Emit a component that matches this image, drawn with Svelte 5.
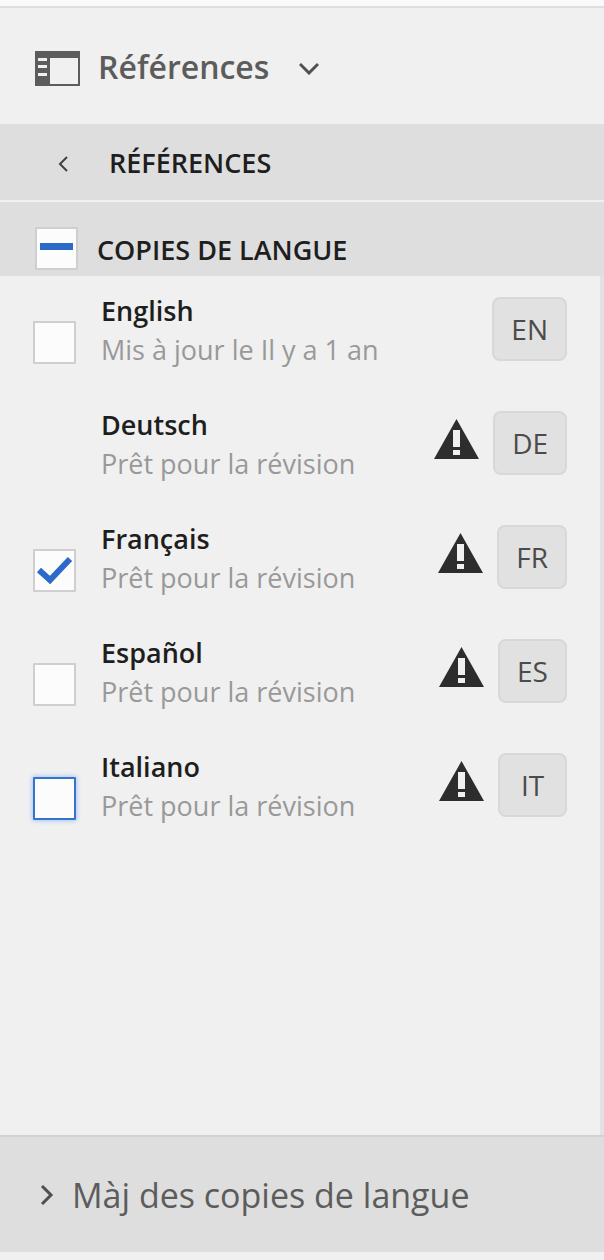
<script>
  let copies = $state([
    { code: 'EN', name: 'English', status: 'Mis à jour le Il y a 1 an', selectable: true, checked: false, warning: false },
    { code: 'DE', name: 'Deutsch', status: 'Prêt pour la révision', selectable: false, checked: false, warning: true },
    { code: 'FR', name: 'Français', status: 'Prêt pour la révision', selectable: true, checked: true, warning: true },
    { code: 'ES', name: 'Español', status: 'Prêt pour la révision', selectable: true, checked: false, warning: true },
    { code: 'IT', name: 'Italiano', status: 'Prêt pour la révision', selectable: true, checked: false, warning: true, active: true }
  ]);

  let some = $derived(copies.some((c) => c.checked));
  let all = $derived(copies.every((c) => c.checked || !c.selectable));

  function toggleAll(event) {
    const value = event.currentTarget.checked;
    for (const copy of copies) if (copy.selectable) copy.checked = value;
  }
</script>

<div class="rail">
  <header class="top">
    <button class="switcher">
      <svg class="panel-icon" width="45" height="40" viewBox="0 0 45 40" aria-hidden="true">
        <path fill="#5c5c5c" fill-rule="evenodd" d="M0 5H45V40H0ZM15 12V38H43V12ZM3 12V15H12V12ZM3 19V22H12V19ZM3 27V30H12V27Z" />
      </svg>
      <span class="title">Références</span>
      <svg class="down" width="20" height="18" viewBox="0 0 20 18" aria-hidden="true">
        <path d="M1 7L10 16L19 7" fill="none" stroke="#505050" stroke-width="3" />
      </svg>
    </button>
  </header>

  <nav class="back-bar">
    <button class="back">
      <svg width="10" height="20" viewBox="0 0 10 20" aria-hidden="true">
        <path d="M9 5L2 12L9 19" fill="none" stroke="#404040" stroke-width="2" />
      </svg>
      <span>RÉFÉRENCES</span>
    </button>
  </nav>

  <label class="group">
    <input type="checkbox" checked={all} indeterminate={some && !all} onchange={toggleAll} />
    <span>COPIES DE LANGUE</span>
  </label>

  <ul class="list">
    {#each copies as copy (copy.code)}
      <li class="row">
        <span class="tick">
          {#if copy.selectable}
            <input id="copy-{copy.code}" type="checkbox" class:active={copy.active} bind:checked={copy.checked} />
          {/if}
        </span>
        <label class="text" for={copy.selectable ? `copy-${copy.code}` : undefined}>
          <span class="name">{copy.name}</span>
          <span class="status">{copy.status}</span>
        </label>
        {#if copy.warning}
          <svg class="warning" width="45" height="40" viewBox="0 0 45 40" aria-hidden="true">
            <path fill="#2d2d2d" d="M22.500 0L45 40H0Z" />
            <path fill="#f0f0f0" d="M19 11H26V28H19ZM19 31H26V36H19Z" />
          </svg>
        {/if}
        <span class="code">{copy.code}</span>
      </li>
    {/each}
  </ul>

  <footer class="bottom">
    <button class="update">
      <svg width="14" height="20" viewBox="0 0 14 20" aria-hidden="true">
        <path d="M2 1L11 10L2 19" fill="none" stroke="#505050" stroke-width="3" />
      </svg>
      <span>Màj des copies de langue</span>
    </button>
  </footer>
</div>

<style>
  :global(body) {
    margin: 0;
    background: #f0f0f0;
  }

  .rail {
    box-sizing: border-box;
    display: flex;
    flex-direction: column;
    min-height: 100vh;
    padding-bottom: 8px;
    border-top: 6px solid #fafafa;
    background: #f0f0f0;
    font-family: 'Open Sans', 'Noto Sans', sans-serif;
    color: #1e1e1e;
  }

  button {
    display: flex;
    align-items: center;
    margin: 0;
    padding: 0;
    border: 0;
    background: none;
    color: inherit;
    font: inherit;
    cursor: pointer;
  }

  svg {
    flex: none;
    display: block;
  }

  .top {
    display: flex;
    height: 116px;
    padding: 0 35px;
    border-top: 2px solid #dedede;
  }

  .title {
    margin: 0 30px 0 18px;
    color: #5c5c5c;
    font-size: 32px;
    font-weight: 600;
  }

  .back-bar {
    display: flex;
    height: 76px;
    padding: 0 58px;
    border-bottom: 2px solid #f0f0f0;
    background: #dedede;
    font-size: 27px;
    font-weight: 600;
  }

  .back {
    gap: 41px;
  }

  .group {
    display: flex;
    align-items: flex-end;
    gap: 19px;
    height: 68px;
    padding: 0 35px 6px;
    background: #dedede;
    font-size: 27px;
    font-weight: 600;
    line-height: 40px;
  }

  input {
    flex: none;
    box-sizing: border-box;
    width: 43px;
    height: 43px;
    margin: 0;
    border: 2px solid #cfcfcf;
    border-radius: 1px;
    appearance: none;
    background: #fcfcfc center / 100% 100% no-repeat;
  }

  input:checked {
    background-image: url("data:image/svg+xml,%3Csvg xmlns='http://www.w3.org/2000/svg' viewBox='0 0 39 39'%3E%3Cpath d='M4 19L15 29L35 8' fill='none' stroke='%232b6ac8' stroke-width='6'/%3E%3C/svg%3E");
  }

  input:indeterminate {
    background-image: url("data:image/svg+xml,%3Csvg xmlns='http://www.w3.org/2000/svg' viewBox='0 0 39 39'%3E%3Cpath d='M3 14H36V21H3Z' fill='%232b6ac8'/%3E%3C/svg%3E");
  }

  input.active {
    border-color: #3573cc;
    box-shadow: 0 0 4px 1px #a9c6f2;
  }

  .list {
    flex: 1;
    margin: 0;
    padding: 21px 33px 0;
    border-right: 4px solid #e2e2e2;
    list-style: none;
  }

  .row {
    display: flex;
    align-items: flex-start;
    height: 114px;
  }

  .tick {
    flex: none;
    width: 43px;
    margin: 24px 25px 0 0;
  }

  .tick input {
    display: block;
  }

  .text {
    flex: 1;
    display: flex;
    flex-direction: column;
    line-height: 39px;
    margin-top: -6px;
    white-space: nowrap;
  }

  .name {
    font-size: 27px;
    font-weight: 600;
  }

  .status {
    color: #999;
    font-size: 27px;
  }

  .warning {
    margin: 8px 14px 0 0;
  }

  .code {
    box-sizing: border-box;
    min-width: 69px;
    padding: 0 17px;
    border: 2px solid #d8d8d8;
    border-radius: 8px;
    background: #e1e1e1;
    color: #4b4b4b;
    font-size: 28px;
    line-height: 60px;
    text-align: center;
  }

  .bottom {
    display: flex;
    height: 115px;
    padding: 0 40px;
    border-top: 2px solid #d2d2d2;
    background: #dedede;
    color: #5c5c5c;
    font-size: 34px;
  }

  .update {
    gap: 18px;
  }
</style>
